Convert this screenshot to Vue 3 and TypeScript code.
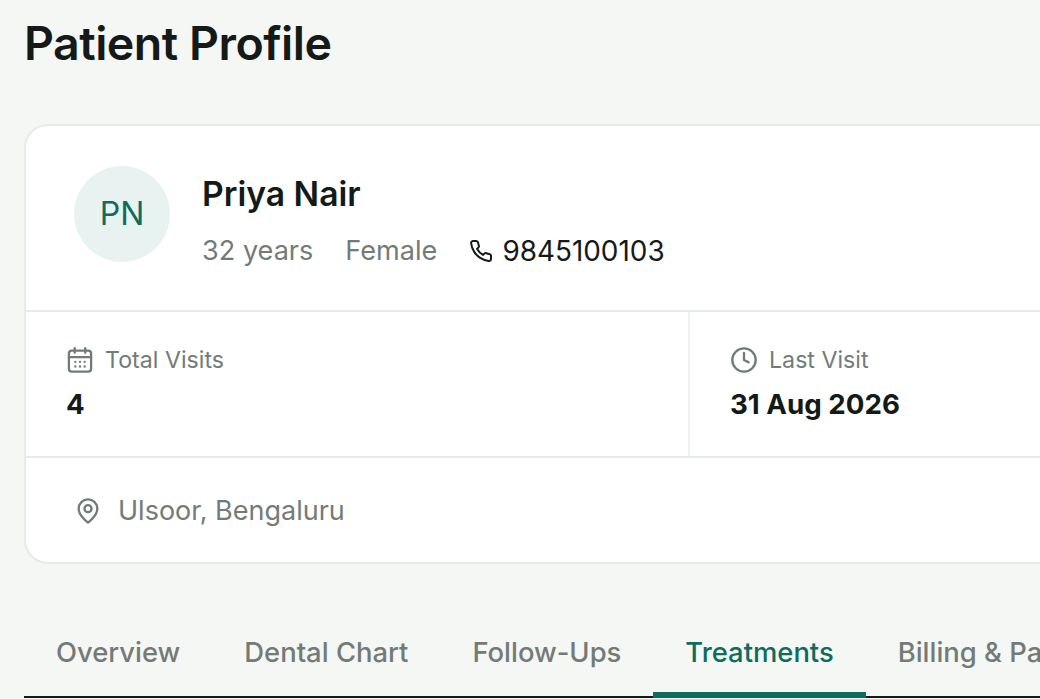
<template>
  <div class="page">
    <h1 class="title">Patient Profile</h1>

    <section class="card">
      <div class="head">
        <div class="avatar">{{ patient.initials }}</div>
        <div class="head-info">
          <h2 class="name">{{ patient.name }}</h2>
          <div class="meta">
            <span>{{ patient.age }}</span>
            <span>{{ patient.gender }}</span>
            <span class="phone">
              <svg viewBox="0 0 24 24" width="24" height="24" fill="none" stroke="currentColor" stroke-width="2" stroke-linecap="round" stroke-linejoin="round">
                <path d="M22 16.92v3a2 2 0 0 1-2.18 2 19.79 19.79 0 0 1-8.63-3.07 19.5 19.5 0 0 1-6-6 19.79 19.79 0 0 1-3.07-8.67A2 2 0 0 1 4.11 2h3a2 2 0 0 1 2 1.72c.13.96.36 1.9.7 2.81a2 2 0 0 1-.45 2.11L8.09 9.91a16 16 0 0 0 6 6l1.27-1.27a2 2 0 0 1 2.11-.45c.91.34 1.85.57 2.81.7A2 2 0 0 1 22 16.92z" />
              </svg>
              {{ patient.phone }}
            </span>
          </div>
        </div>
      </div>

      <div class="stats">
        <div class="stat">
          <div class="stat-label">
            <svg viewBox="0 0 24 24" width="28" height="28" fill="none" stroke="currentColor" stroke-width="2" stroke-linecap="round" stroke-linejoin="round">
              <rect x="2.5" y="4" width="19" height="18" rx="2.5" />
              <path d="M7.5 1.8v4M16.5 1.8v4M2.5 9.5h19" />
              <path d="M8 13.6h.01M12 13.6h.01M16 13.6h.01M8 17.6h.01M12 17.6h.01M16 17.6h.01" />
            </svg>
            Total Visits
          </div>
          <div class="stat-value">{{ patient.visits }}</div>
        </div>
        <div class="stat">
          <div class="stat-label">
            <svg viewBox="0 0 24 24" width="28" height="28" fill="none" stroke="currentColor" stroke-width="2" stroke-linecap="round" stroke-linejoin="round">
              <circle cx="12" cy="12" r="10" />
              <path d="M12 6v6l4 2" />
            </svg>
            Last Visit
          </div>
          <div class="stat-value">{{ patient.lastVisit }}</div>
        </div>
      </div>

      <div class="address">
        <svg viewBox="0 0 24 24" width="28" height="28" fill="none" stroke="currentColor" stroke-width="2" stroke-linecap="round" stroke-linejoin="round">
          <path d="M20 10c0 6-8 12-8 12s-8-6-8-12a8 8 0 0 1 16 0z" />
          <circle cx="12" cy="10" r="3" />
        </svg>
        {{ patient.address }}
      </div>
    </section>

    <nav class="tabs">
      <a
        v-for="tab in tabs"
        :key="tab"
        class="tab"
        :class="{ active: tab === activeTab }"
      >{{ tab }}</a>
    </nav>
  </div>
</template>

<script setup lang="ts">
const patient = {
  initials: "PN",
  name: "Priya Nair",
  age: "32 years",
  gender: "Female",
  phone: "9845100103",
  visits: 4,
  lastVisit: "31 Aug 2026",
  address: "Ulsoor, Bengaluru",
};

const tabs = ["Overview", "Dental Chart", "Follow-Ups", "Treatments", "Billing & Payments"];
const activeTab = "Treatments";
</script>

<style>
html,
body {
  margin: 0;
  background: #f5f7f5;
  overflow: hidden;
}
</style>

<style scoped>
.page {
  width: 1320px;
  padding: 16px 24px 0;
  box-sizing: border-box;
  font-family: Inter, "Liberation Sans", sans-serif;
  color: #141a17;
}

.title {
  margin: 0 0 53px;
  font-size: 46.5px;
  line-height: 55px;
  font-weight: 600;
  letter-spacing: -0.5px;
}

.card {
  background: #fff;
  border: 2px solid #e5ebe8;
  border-radius: 24px;
}

.head {
  display: flex;
  gap: 32px;
  padding: 40px 48px 39px;
  border-bottom: 2px solid #e5ebe8;
}

.avatar {
  width: 96px;
  height: 96px;
  padding-bottom: 1px;
  box-sizing: border-box;
  border-radius: 50%;
  background: #e8f3f1;
  color: #0f6b5e;
  font-size: 32px;
  display: flex;
  align-items: center;
  justify-content: center;
}

.name {
  margin: 4px 0 13px;
  font-size: 33.7px;
  line-height: 48px;
  font-weight: 600;
}

.meta {
  display: flex;
  gap: 32px;
  font-size: 27.1px;
  line-height: 40px;
  color: #737b77;
}

.phone {
  display: flex;
  align-items: center;
  gap: 9px;
  font-size: 27.9px;
  color: #141a17;
}

.stats {
  display: grid;
  grid-template-columns: 664px 664px;
  border-bottom: 2px solid #e5ebe8;
}

.stat {
  padding: 32px 40px;
  border-right: 2px solid #edf0ee;
}

.stat-label {
  display: flex;
  align-items: center;
  gap: 11px;
  color: #737b77;
  font-size: 23.2px;
  line-height: 32px;
}

.stat-value {
  margin-top: 8px;
  font-size: 27.7px;
  line-height: 40px;
  font-weight: 700;
}

.address {
  display: flex;
  align-items: center;
  gap: 16px;
  padding: 33px 48px 31px;
  color: #737b77;
  font-size: 27px;
  line-height: 40px;
}

.tabs {
  display: flex;
  margin-top: 56px;
  border-bottom: 2px solid #141a17;
  white-space: nowrap;
}

.tab {
  padding: 12px 32px 20px;
  font-size: 27.4px;
  line-height: 40px;
  font-weight: 500;
  color: #737b77;
  border-bottom: 6px solid transparent;
  margin-bottom: -2px;
}

.tab.active {
  color: #0f6b5e;
  border-bottom-color: #0f6b5e;
}
</style>
